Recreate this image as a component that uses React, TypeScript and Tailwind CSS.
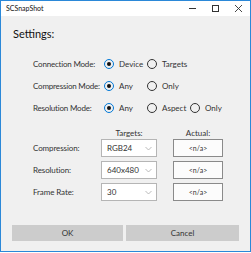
import React from "react";

const font = { fontFamily: 'Lato, "Open Sans", sans-serif' };

function Radio({ checked, label, w }: { checked?: boolean; label: string; w: string }) {
  return (
    <div className={`flex items-center ${w}`}>
      {checked ? (
        <div className="w-[10px] h-[10px] rounded-full border-[1.5px] border-[#0078d7] flex items-center justify-center">
          <div className="w-[4px] h-[4px] rounded-full bg-[#111]" />
        </div>
      ) : (
        <div className="w-[10px] h-[10px] rounded-full border-[1.5px] border-[#333]" />
      )}
      <span className="ml-[5px] text-[8px] leading-[12px] text-[#333]">{label}</span>
    </div>
  );
}

function Row({ label, children }: { label: string; children: React.ReactNode }) {
  return (
    <div className="flex items-center h-[22px]">
      <div className="w-[71px] text-[8px] leading-[12px] tracking-[-0.2px] text-[#333] whitespace-nowrap">{label}</div>
      {children}
    </div>
  );
}

function Select({ value }: { value: string }) {
  return (
    <div className="w-[56px] h-[18px] bg-white border border-[#b5b5b5] flex items-center justify-between pl-[5px] pr-[4px]">
      <span className="text-[8px] text-[#333]">{value}</span>
      <svg width="7" height="5" viewBox="0 0 7 5">
        <path d="M0.5 1 L3.5 4 L6.5 1" fill="none" stroke="#aaa" strokeWidth="0.8" />
      </svg>
    </div>
  );
}

function Actual() {
  return (
    <div className="w-[50px] h-[18px] bg-[#fcfcfc] border border-[#8a8a8a] flex items-center justify-center">
      <span className="text-[7px] text-[#333]">&lt;n/a&gt;</span>
    </div>
  );
}

function TRow({ label, value }: { label: string; value: string }) {
  return (
    <div className="flex items-center h-[18px] mb-[4px]">
      <div className="w-[68px] text-[8px] leading-[12px] tracking-[-0.1px] text-[#333]">{label}</div>
      <Select value={value} />
      <div className="w-[16px]" />
      <Actual />
    </div>
  );
}

export default function App() {
  return (
    <div style={font} className="w-[251px] h-[252px] border border-[#2b88d8] flex flex-col bg-[#f0f0f0] overflow-hidden">
      <div className="h-[15px] bg-white flex items-center justify-between">
        <span className="pl-[5px] text-[7px] text-[#111]">SCSnapShot</span>
        <div className="flex items-center h-full">
          <div className="w-[23px] flex justify-center">
            <div className="w-[7px] h-px bg-[#333]" />
          </div>
          <div className="w-[23px] flex justify-center">
            <div className="w-[7px] h-[7px] border border-[#333]" />
          </div>
          <div className="w-[23px] flex justify-center">
            <svg width="7" height="7" viewBox="0 0 7 7">
              <path d="M0 0 L7 7 M7 0 L0 7" stroke="#333" strokeWidth="0.9" />
            </svg>
          </div>
        </div>
      </div>
      <div className="flex-1 flex flex-col pl-[11px] pr-[10px]">
        <div className="mt-[11px] ml-[1px] text-[11px] leading-[14px] text-[#111]">Settings:</div>
        <div className="mt-[12px] ml-[21px]">
          <Row label="Connection Mode:">
            <Radio checked label="Device" w="w-[43px]" />
            <Radio label="Targets" w="w-[43px]" />
          </Row>
          <Row label="Compression Mode:">
            <Radio checked label="Any" w="w-[43px]" />
            <Radio label="Only" w="w-[43px]" />
          </Row>
          <Row label="Resolution Mode:">
            <Radio checked label="Any" w="w-[43px]" />
            <Radio label="Aspect" w="w-[43px]" />
            <Radio label="Only" w="w-[43px]" />
          </Row>
          <div className="mt-[7px] flex h-[13px] items-center">
            <div className="w-[68px]" />
            <div className="w-[56px] text-center text-[8px] text-[#333]">Targets:</div>
            <div className="w-[16px]" />
            <div className="w-[50px] text-center text-[8px] text-[#333]">Actual:</div>
          </div>
          <TRow label="Compression:" value="RGB24" />
          <TRow label="Resolution:" value="640x480" />
          <TRow label="Frame Rate:" value="30" />
        </div>
        <div className="mt-[20px] flex gap-[3px]">
          <div className="w-[111px] h-[16px] bg-[#cccccc] flex items-center justify-center text-[8px] text-[#333]">OK</div>
          <div className="w-[113px] h-[16px] bg-[#cccccc] flex items-center justify-center text-[8px] text-[#333]">Cancel</div>
        </div>
      </div>
    </div>
  );
}
